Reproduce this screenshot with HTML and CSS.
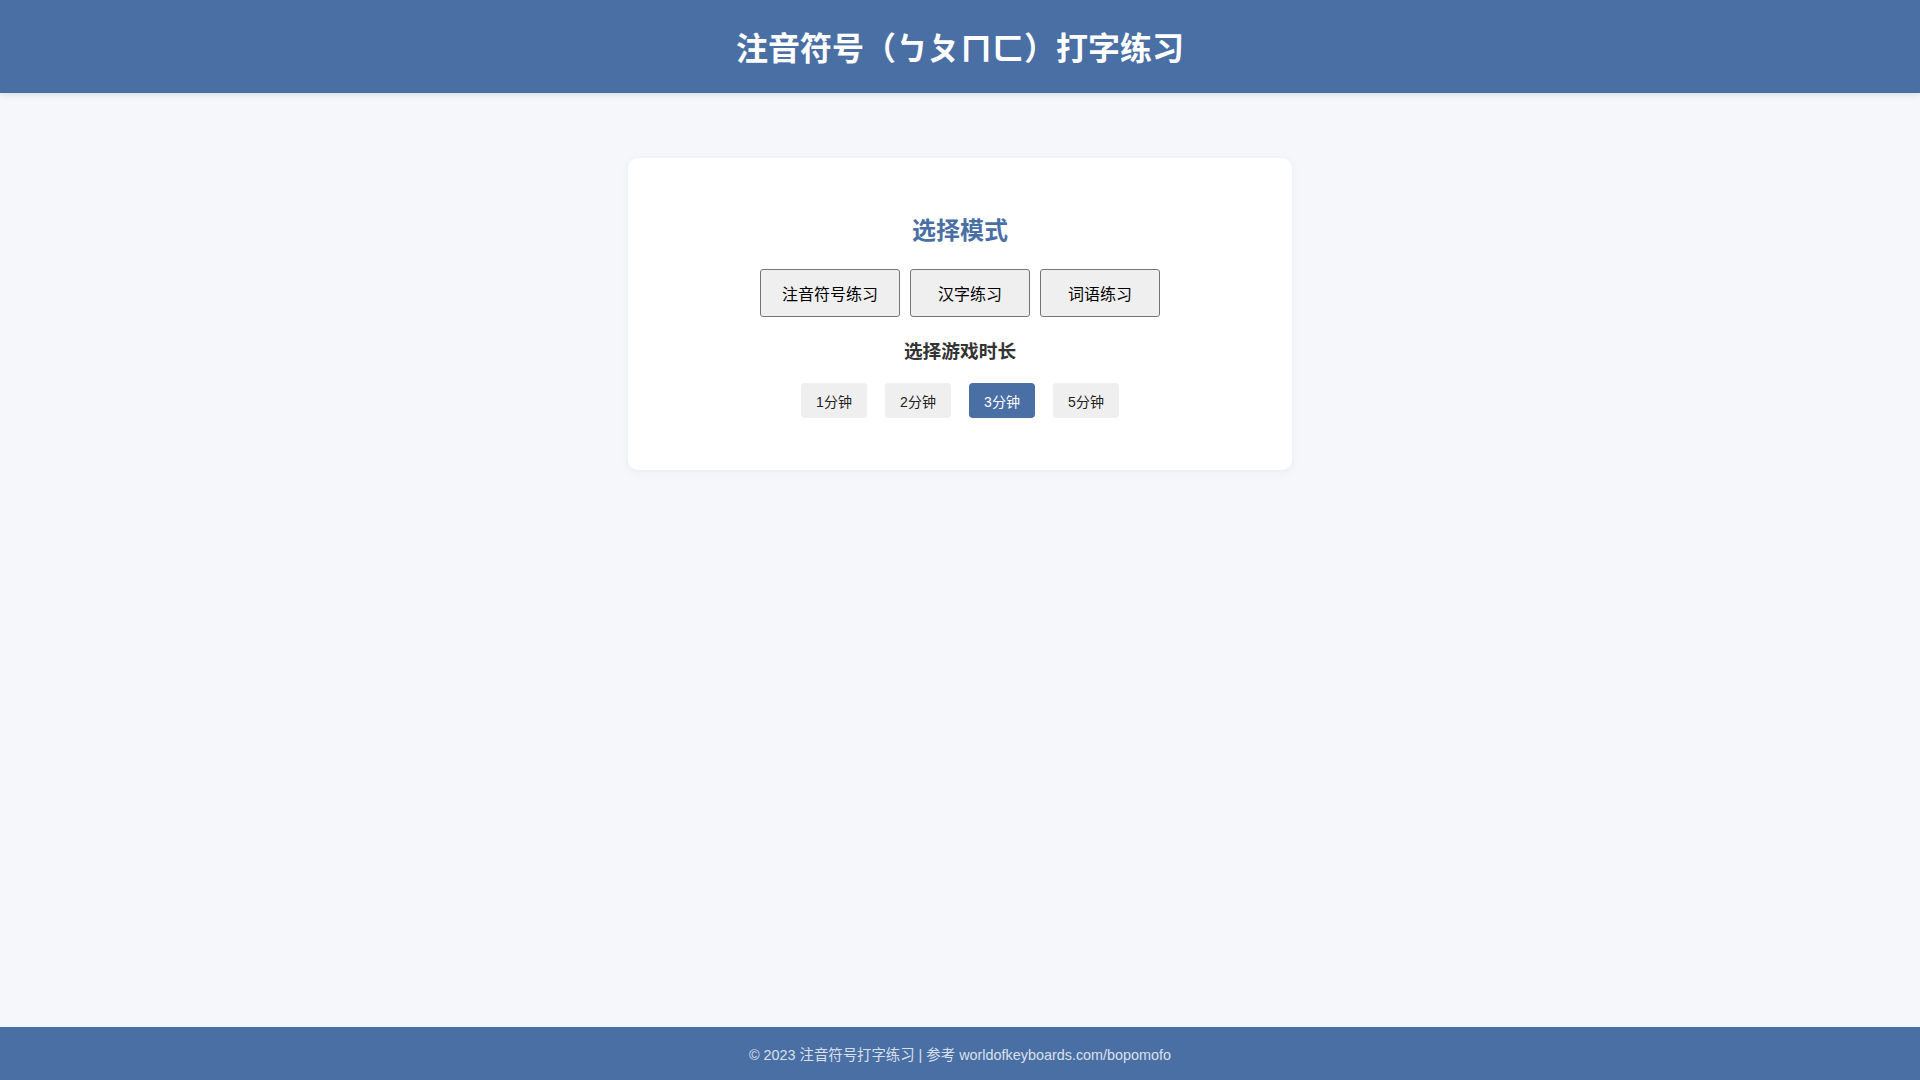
FILE: index.html
```html
<!DOCTYPE html>
<html lang="zh-CN">
<head>
<meta charset="utf-8">
<title>注音符号（ㄅㄆㄇㄈ）打字练习</title>
<link rel="stylesheet" href="styles.css">
</head>
<body>
<header class="site-header">
  <h1 class="site-title">注音符号（ㄅㄆㄇㄈ）打字练习</h1>
</header>
<main class="main">
  <section class="card">
    <h2 class="card-title">选择模式</h2>
    <div class="mode-row">
      <button class="mode-btn">注音符号练习</button>
      <button class="mode-btn">汉字练习</button>
      <button class="mode-btn">词语练习</button>
    </div>
    <h3 class="sub-title">选择游戏时长</h3>
    <div class="time-row">
      <button class="time-btn">1分钟</button>
      <button class="time-btn">2分钟</button>
      <button class="time-btn active">3分钟</button>
      <button class="time-btn">5分钟</button>
    </div>
  </section>
</main>
<footer class="site-footer">© 2023 注音符号打字练习 | 参考 worldofkeyboards.com/bopomofo</footer>
</body>
</html>
```

FILE: styles.css
```css
* { box-sizing: border-box; }
html, body { height: 100%; }
body {
  margin: 0;
  min-height: 100vh;
  display: flex;
  flex-direction: column;
  background: #f5f7fa;
  color: #333;
  font-family: "Liberation Sans", Arial, "Noto Sans CJK SC", sans-serif;
}
.site-header {
  height: 93px;
  background: #4a6fa5;
  display: flex;
  align-items: center;
  justify-content: center;
  box-shadow: 0 2px 6px rgba(0, 0, 0, 0.1);
}
.site-title {
  margin: 0;
  color: #fff;
  font-size: 32px;
  font-weight: bold;
  line-height: 46px;
  padding-top: 5px;
}
.main {
  flex: 1;
  display: flex;
  flex-direction: column;
  align-items: center;
  padding-top: 65px;
}
.card {
  width: 664px;
  background: #fff;
  border-radius: 10px;
  box-shadow: 0 2px 10px rgba(0, 0, 0, 0.05);
  padding: 32px 32px 52px;
  display: flex;
  flex-direction: column;
  align-items: center;
}
.card-title {
  margin: 23px 0 21px;
  font-size: 24px;
  line-height: 35px;
  color: #4a6fa5;
  font-weight: bold;
}
.mode-row {
  display: flex;
  gap: 10px;
  justify-content: center;
}
.mode-btn {
  min-width: 120px;
  height: 48px;
  padding: 0 21px;
  font-family: inherit;
  font-size: 16px;
  color: #000;
  background: #efefef;
  border: 1px solid #767676;
  border-radius: 3px;
}
.sub-title {
  margin: 21px 0 18px;
  font-size: 18.72px;
  line-height: 27px;
  color: #333;
  font-weight: bold;
}
.time-row {
  display: flex;
  gap: 18px;
  justify-content: center;
}
.time-btn {
  width: 66px;
  height: 35px;
  padding: 0;
  font-family: inherit;
  font-size: 14px;
  color: #222;
  background: #efefef;
  border: none;
  border-radius: 4px;
}
.time-btn.active {
  background: #4a6fa5;
  color: #fff;
}
.site-footer {
  height: 53px;
  background: #4a6fa5;
  color: rgba(255, 255, 255, 0.8);
  font-size: 14.4px;
  display: flex;
  align-items: center;
  justify-content: center;
}
```
